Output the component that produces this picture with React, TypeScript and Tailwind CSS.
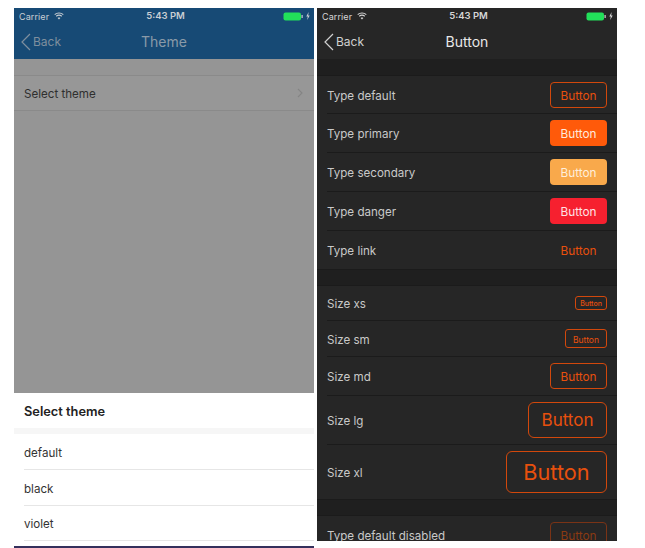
const font = "font-['Inter','Liberation_Sans',sans-serif]";

const StatusBar = ({ text, green }: { text: string; green: string }) => (
  <div className="h-4 flex items-center justify-between pl-[5px] pr-[4px] relative">
    <div className="flex items-center gap-[5px]">
      <span className="text-[9px] leading-none tracking-[0.1px]" style={{ color: text }}>Carrier</span>
      <svg width="10" height="8" viewBox="0 0 10 8" fill="none" stroke={text} strokeWidth="1.1">
        <path d="M0.7 2.6C3 0.5 7 0.5 9.3 2.6" />
        <path d="M2.2 4.2C3.7 3 6.3 3 7.8 4.2" />
        <path d="M5 7.6L3.6 5.9C4.4 5.3 5.6 5.3 6.4 5.9Z" fill={text} stroke="none" />
      </svg>
    </div>
    <span className="absolute left-0 right-0 text-center text-[9.5px] font-semibold leading-none pl-[3px]" style={{ color: text }}>
      5:43 PM
    </span>
    <div className="flex items-center gap-[3px]">
      <svg width="20" height="9" viewBox="0 0 20 9">
        <rect x="0.5" y="0.5" width="17.5" height="8" rx="2" fill={green} />
        <rect x="18.5" y="3" width="1.2" height="3" fill={text} />
      </svg>
      <svg width="4" height="8" viewBox="0 0 4 8">
        <path d="M2.6 0L0.3 4.4H1.8L1.2 8L3.7 3.4H2.2Z" fill={text} />
      </svg>
    </div>
  </div>
);

const NavBar = ({ title, back, color }: { title: string; back: string; color: string }) => (
  <div className="h-[35px] flex items-center relative">
    <svg className="ml-[7px]" width="10" height="18" viewBox="0 0 10 18" fill="none" stroke={back} strokeWidth="1.2">
      <path d="M9 1L1 9L9 17" />
    </svg>
    <span className="ml-[2px] pt-[1px] text-[12px]" style={{ color: back }}>Back</span>
    <span className="absolute left-0 right-0 text-center text-[14px]" style={{ color }}>{title}</span>
  </div>
);

const Btn = ({ className }: { className: string }) => (
  <div className={`flex items-center justify-center shrink-0 ${className}`}>Button</div>
);

const Row = ({ label, h, last, children }: { label: string; h: string; last?: boolean; children: React.ReactNode }) => (
  <div className={`pl-[10px] ${h}`}>
    <div className={`h-full flex items-center justify-between pr-[10px] ${last ? "" : "border-b border-[#1b1b1b]"}`}>
      <span className="pt-[4px] text-[11.6px] text-[#c9c9c9]">{label}</span>
      {children}
    </div>
  </div>
);

const outline = "border border-[#d2480c] text-[#e8500d]";
const md = "w-[57px] h-[26px] pt-[4px] text-[11.8px] rounded-[4px]";

const ThemePhone = () => (
  <div className="w-[300px] h-[540px] flex flex-col">
    <div className="bg-[#174a75] h-[51px]">
      <StatusBar text="#c9ced3" green="#22e05a" />
      <NavBar title="Theme" back="#7f8f9e" color="#8a9aa8" />
    </div>
    <div className="flex-1 bg-[#959595] pt-4">
      <div className="h-[36px] border-y border-[#8a8a8a] flex items-center justify-between pl-[10px] pr-[11px] bg-[#979797]">
        <span className="pt-[4px] text-[11.6px] text-[#2f2f2f]">Select theme</span>
        <svg width="6" height="10" viewBox="0 0 6 10" fill="none" stroke="#858585" strokeWidth="1.1">
          <path d="M1 1L5 5L1 9" />
        </svg>
      </div>
    </div>
    <div className="bg-white">
      <div className="h-[35px] pt-[2px] flex items-center pl-[10px] text-[12.8px] font-semibold text-[#222]">Select theme</div>
      <div className="h-[6px] bg-[#f6f6f6]" />
      <div className="pl-[10px]">
        <div className="h-[36px] pt-[4px] flex items-center border-b border-[#e6e6e6] text-[11.6px] text-[#333]">default</div>
        <div className="h-[36px] pt-[4px] flex items-center border-b border-[#e6e6e6] text-[11.6px] text-[#333]">black</div>
        <div className="h-[35px] pt-[4px] flex items-center border-b border-[#e6e6e6] text-[11.6px] text-[#333]">violet</div>
      </div>
      <div className="h-[5px] bg-white" />
    </div>
    <div className="h-[2px] bg-[#34305c]" />
  </div>
);

const ButtonPhone = () => (
  <div className="w-[300px] h-[533px] flex flex-col overflow-hidden bg-[#1e1e1e]">
    <div className="bg-[#262626] h-[51px] shrink-0">
      <StatusBar text="#d6d6d6" green="#22e05a" />
      <NavBar title="Button" back="#d0d0d0" color="#e8e8e8" />
    </div>
    <div className="h-[16px] shrink-0 bg-[#1f1f1f]" />
    <div className="bg-[#262626] border-y border-[#1b1b1b] shrink-0">
      <Row label="Type default" h="h-[38px]"><Btn className={`${outline} ${md}`} /></Row>
      <Row label="Type primary" h="h-[39px]"><Btn className={`${md} bg-[#ff5a0a] text-[#ffe9dc]`} /></Row>
      <Row label="Type secondary" h="h-[39px]"><Btn className={`${md} bg-[#f9a94b] text-[#ffeeda]`} /></Row>
      <Row label="Type danger" h="h-[39px]"><Btn className={`${md} bg-[#f6202f] text-[#ffe3e5]`} /></Row>
      <Row label="Type link" h="h-[38px]" last><Btn className={`${md} text-[#e8500d]`} /></Row>
    </div>
    <div className="h-[15px] shrink-0 bg-[#1f1f1f]" />
    <div className="bg-[#262626] border-y border-[#1b1b1b] shrink-0">
      <Row label="Size xs" h="h-[35px]"><Btn className={`${outline} w-[32px] h-[14px] pt-[2px] text-[7px] font-medium rounded-[3px]`} /></Row>
      <Row label="Size sm" h="h-[36px]"><Btn className={`${outline} w-[42px] h-[19px] pt-[3px] text-[8.5px] rounded-[3px]`} /></Row>
      <Row label="Size md" h="h-[39px]"><Btn className={`${outline} ${md}`} /></Row>
      <Row label="Size lg" h="h-[49px]"><Btn className={`${outline} w-[79px] h-[36px] pt-[2px] text-[17px] rounded-[6px]`} /></Row>
      <Row label="Size xl" h="h-[54px]" last><Btn className={`${outline} w-[101px] h-[42px] text-[21.7px] rounded-[6px]`} /></Row>
    </div>
    <div className="h-[15px] shrink-0 bg-[#1f1f1f]" />
    <div className="bg-[#262626] border-t border-[#1b1b1b] shrink-0">
      <Row label="Type default disabled" h="h-[39px]">
        <Btn className={`${md} border border-[#7a3316] text-[#8a3a12]`} />
      </Row>
    </div>
  </div>
);

export default function App() {
  return (
    <div className={`w-[645px] h-[548px] bg-white overflow-hidden pt-2 pl-[14px] flex items-start gap-[3px] ${font}`}>
      <ThemePhone />
      <ButtonPhone />
    </div>
  );
}
